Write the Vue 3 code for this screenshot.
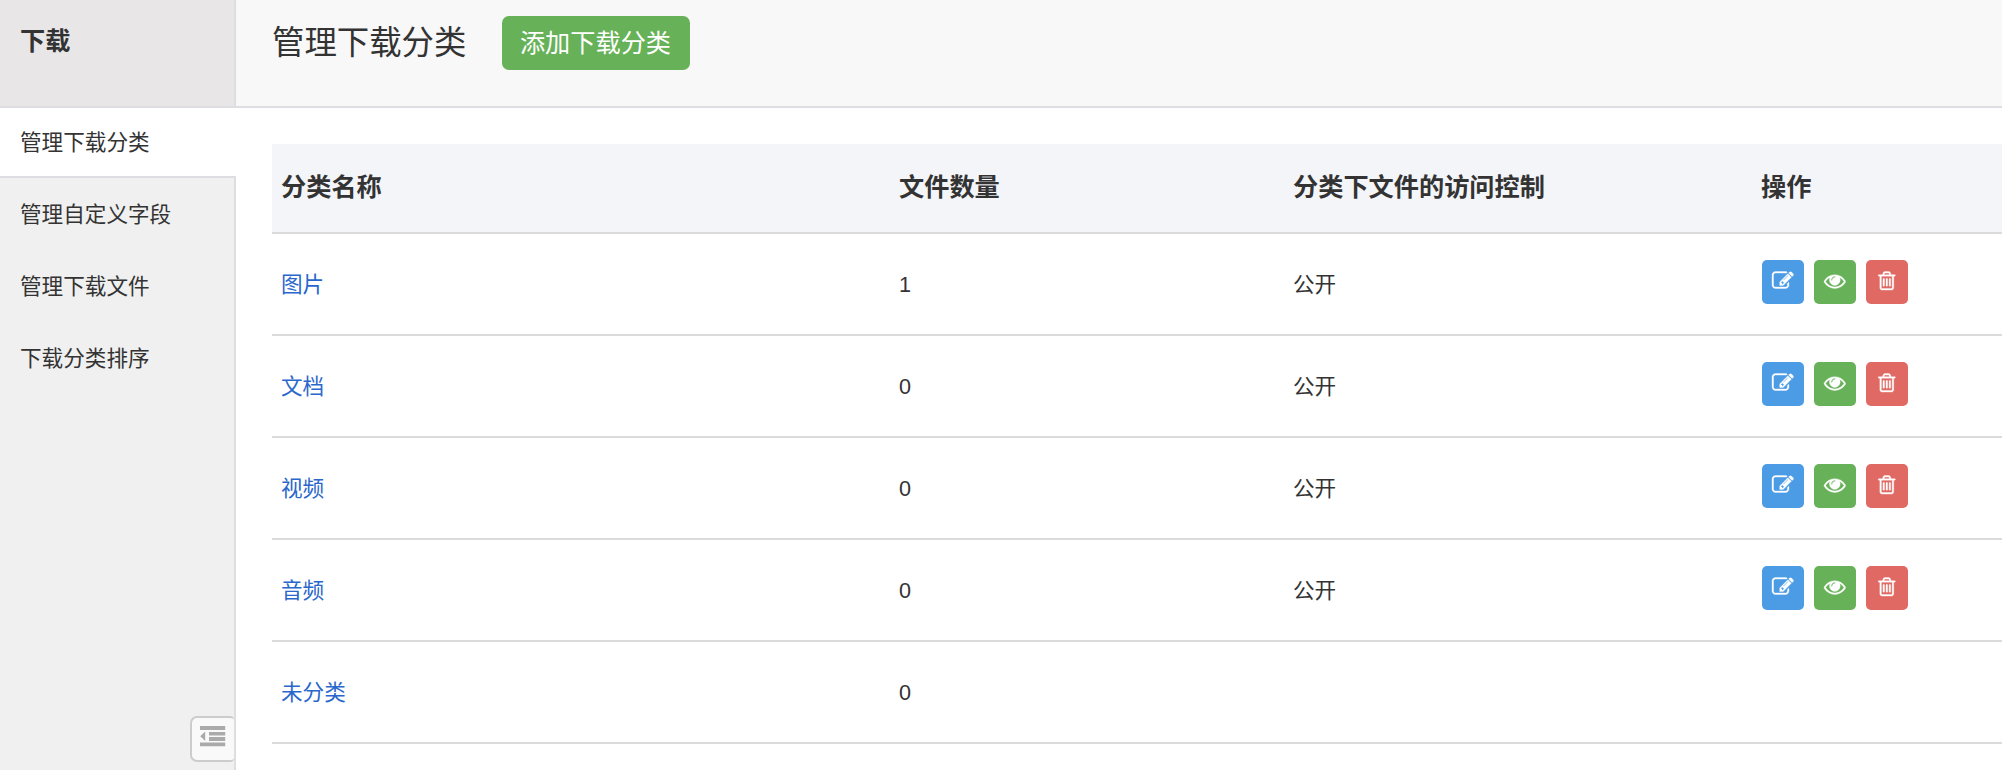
<template>
  <div class="layout">
    <aside class="sidebar">
      <div class="sidebar-title">下载</div>
      <ul class="menu">
        <li
          v-for="item in menu"
          :key="item"
          :class="{ active: item === current }"
        >
          {{ item }}
        </li>
      </ul>
      <button class="btn-collapse">
        <svg viewBox="0 0 26 22">
          <path
            d="M0 0h25.2v4h-25.2zM9 6h16.2v3.4h-16.2zM9 11h16.2v4h-16.2zM0 16.4h25.2v3.8h-25.2zM5.2 5.6v9.4l-5-4.7z"
          />
        </svg>
      </button>
    </aside>
    <main class="main">
      <header class="header">
        <h1>管理下载分类</h1>
        <button class="btn-add">添加下载分类</button>
      </header>
      <div class="content">
        <table>
          <thead>
            <tr>
              <th class="col-name">分类名称</th>
              <th class="col-count">文件数量</th>
              <th class="col-access">分类下文件的访问控制</th>
              <th>操作</th>
            </tr>
          </thead>
          <tbody>
            <tr v-for="category in categories" :key="category.name">
              <td>
                <a href="#">{{ category.name }}</a>
              </td>
              <td>{{ category.count }}</td>
              <td>{{ category.access }}</td>
              <td>
                <div v-if="category.access" class="actions">
                  <button
                    v-for="action in actions"
                    :key="action.name"
                    class="btn-icon"
                    :class="action.name"
                    :title="action.title"
                  >
                    <svg viewBox="0 0 1792 1792"><path :d="action.icon" /></svg>
                  </button>
                </div>
              </td>
            </tr>
          </tbody>
        </table>
      </div>
    </main>
  </div>
</template>

<script setup>
const current = "管理下载分类";

const menu = ["管理下载分类", "管理自定义字段", "管理下载文件", "下载分类排序"];

const categories = [
  { name: "图片", count: 1, access: "公开" },
  { name: "文档", count: 0, access: "公开" },
  { name: "视频", count: 0, access: "公开" },
  { name: "音频", count: 0, access: "公开" },
  { name: "未分类", count: 0, access: "" },
];

const actions = [
  {
    name: "edit",
    title: "编辑",
    icon: "M888 1184l116-116-152-152-116 116v56h96v96h56zm440-720q-16-16-33 1l-350 350q-17 17-1 33t33-1l350-350q17-17 1-33zm80 594v190q0 119-84.5 203.5t-203.5 84.5h-832q-119 0-203.5-84.5t-84.5-203.5v-832q0-119 84.5-203.5t203.5-84.5h832q63 0 117 25 15 7 18 23 3 17-9 29l-49 49q-14 14-32 8-23-6-45-6h-832q-66 0-113 47t-47 113v832q0 66 47 113t113 47h832q66 0 113-47t47-113v-126q0-13 9-22l64-64q15-15 35-7t20 29zm-96-738l288 288-672 672h-288v-288zm444 132l-92 92-288-288 92-92q28-28 68-28t68 28l152 152q28 28 28 68t-28 68z",
  },
  {
    name: "view",
    title: "查看",
    icon: "M1664 960q-152-236-381-353 61 104 61 225 0 185-131.5 316.5t-316.5 131.5-316.5-131.5-131.5-316.5q0-121 61-225-229 117-381 353 133 205 333.5 326.5t434.5 121.5 434.5-121.5 333.5-326.5zm-720-384q0-20-14-34t-34-14q-125 0-214.5 89.5t-89.5 214.5q0 20 14 34t34 14 34-14 14-34q0-86 61-147t147-61q20 0 34-14t14-34zm848 384q0 34-20 69-140 230-376.5 368.5t-499.5 138.5-499.5-139-376.5-368q-20-35-20-69t20-69q140-229 376.5-368t499.5-139 499.5 139 376.5 368q20 35 20 69z",
  },
  {
    name: "delete",
    title: "删除",
    icon: "M704 736v576q0 14-9 23t-23 9h-64q-14 0-23-9t-9-23v-576q0-14 9-23t23-9h64q14 0 23 9t9 23zm256 0v576q0 14-9 23t-23 9h-64q-14 0-23-9t-9-23v-576q0-14 9-23t23-9h64q14 0 23 9t9 23zm256 0v576q0 14-9 23t-23 9h-64q-14 0-23-9t-9-23v-576q0-14 9-23t23-9h64q14 0 23 9t9 23zm128 724v-948h-896v948q0 22 7 40.5t14.5 27 10.5 8.5h832q3 0 10.5-8.5t14.5-27 7-40.5zm-672-1076h448l-48-117q-7-9-17-11h-317q-10 2-17 11zm928 32v64q0 14-9 23t-23 9h-96v948q0 83-47 143.5t-113 60.5h-832q-66 0-113-58.5t-47-141.5v-952h-96q-14 0-23-9t-9-23v-64q0-14 9-23t23-9h309l70-167q15-37 54-63t79-26h320q40 0 79 26t54 63l70 167h309q14 0 23 9t9 23z",
  },
];
</script>

<style>
body {
  margin: 0;
  overflow: hidden;
}
</style>

<style scoped>
.layout {
  display: flex;
  height: 770px;
  background-color: #fff;
  color: #333;
  font-family: "Liberation Sans", "Noto Sans CJK SC", sans-serif;
  font-size: 21.6px;
}

button {
  font-family: inherit;
  border: none;
  cursor: pointer;
}

.sidebar {
  display: flex;
  flex-direction: column;
  flex: none;
  width: 236px;
  background-color: #f0f0f0;
  background-image: linear-gradient(#dddde2, #dddde2);
  background-size: 2px 100%;
  background-position: right;
  background-repeat: no-repeat;
}

.sidebar-title {
  box-sizing: border-box;
  height: 108px;
  padding: 22px 20px 0;
  border-right: 2px solid #dddde2;
  border-bottom: 2px solid #dddde2;
  background-color: #e8e6e7;
  font-size: 25.2px;
  font-weight: bold;
  line-height: 38px;
}

.menu {
  margin: 0;
  padding: 0;
  list-style: none;
}

.menu li {
  height: 70px;
  padding-left: 20px;
  border-bottom: 2px solid transparent;
  line-height: 70px;
}

.menu li.active {
  height: 68px;
  margin-bottom: 2px;
  border-bottom-color: #dddde2;
  background-color: #fff;
}

.btn-collapse {
  display: flex;
  align-self: flex-end;
  box-sizing: border-box;
  width: 44px;
  height: 46px;
  margin: auto 2px 8px 0;
  padding: 8px 0 0 8px;
  border: 2px solid #ccc;
  border-right: none;
  border-radius: 7px 4px 4px 7px;
  background-color: #f9f9f9;
}

.btn-collapse svg {
  width: 26px;
  height: 22px;
  fill: #aaa;
}

.main {
  flex: 1;
  min-width: 0;
}

.header {
  display: flex;
  align-items: flex-start;
  box-sizing: border-box;
  height: 108px;
  padding: 16px 0 0 36px;
  border-bottom: 2px solid #dddde2;
  background-color: #f8f8f8;
}

h1 {
  margin: 0;
  font-size: 32.4px;
  font-weight: normal;
  line-height: 54px;
}

.btn-add {
  width: 188px;
  height: 54px;
  margin-left: 35.6px;
  padding: 0 1px 0 0;
  border-radius: 7px;
  background-color: #67b158;
  color: #fff;
  font-size: 25.2px;
  line-height: 54px;
}

.content {
  padding: 36px 0 0 36px;
}

table {
  width: 100%;
  table-layout: fixed;
  border-collapse: separate;
  border-spacing: 0;
}

th,
td {
  box-sizing: border-box;
  padding: 0 9px;
  border-bottom: 2px solid #dbdbdb;
  line-height: 32px;
  text-align: left;
}

th {
  height: 90px;
  padding-bottom: 2px;
  background-color: #f3f5f9;
  font-size: 25.2px;
}

td {
  height: 102px;
  padding-top: 2px;
}

.col-name {
  width: 618px;
}

.col-count {
  width: 394px;
}

.col-access {
  width: 468px;
}

a {
  color: #2a67cc;
  text-decoration: none;
}

.actions {
  display: flex;
  gap: 10px;
  padding-left: 1px;
  margin-top: -6px;
}

.btn-icon {
  display: flex;
  justify-content: center;
  width: 42px;
  height: 44px;
  padding: 9.5px 0 0;
  border-radius: 5px;
}

.btn-icon svg {
  width: 21.6px;
  height: 21.6px;
  overflow: visible;
  fill: #fff;
  stroke: #fff;
  stroke-width: 28;
}

.edit {
  background-color: #4b9ce5;
}

.view {
  background-color: #67b158;
}

.delete {
  background-color: #e06963;
}
</style>
